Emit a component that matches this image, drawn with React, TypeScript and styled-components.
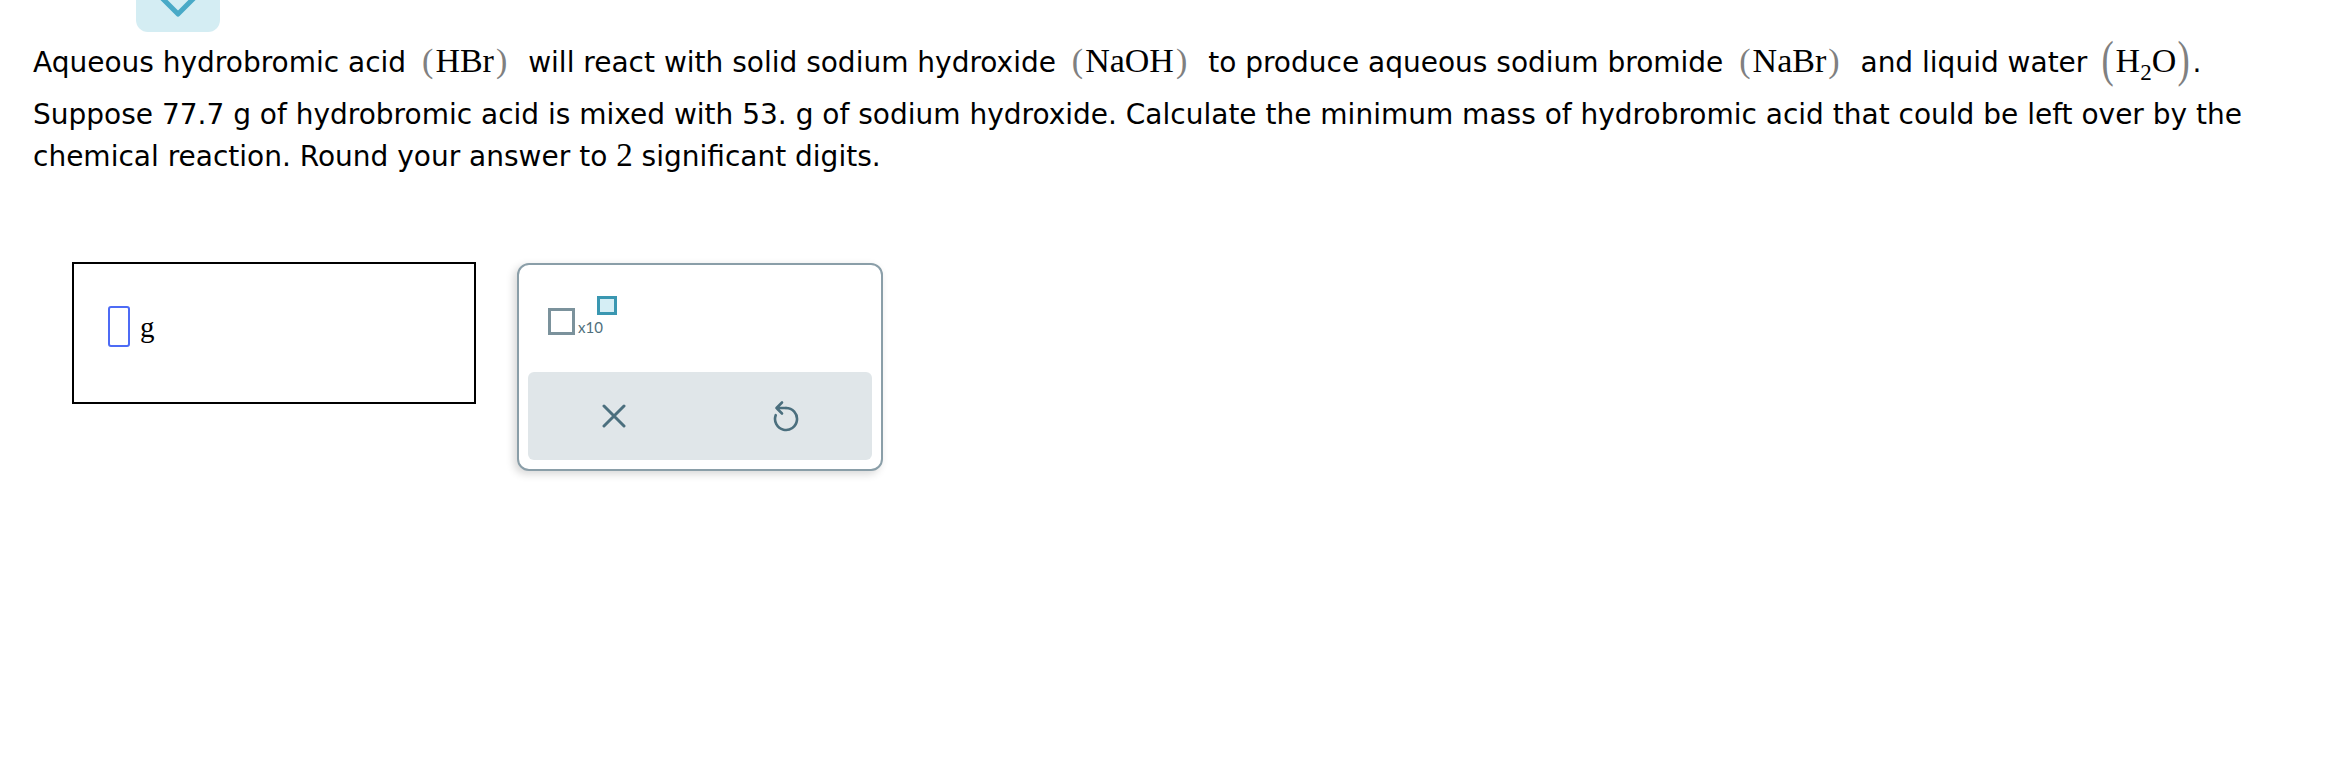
import React from "react";
import styled, { createGlobalStyle } from "styled-components";

const GlobalStyle = createGlobalStyle`
  html, body {
    margin: 0;
    padding: 0;
    background: #ffffff;
  }
  body {
    font-family: "DejaVu Sans", Verdana, sans-serif;
    color: #000000;
  }
`;

const Page = styled.div`
  width: 2346px;
  min-height: 766px;
  box-sizing: border-box;
`;

const TabButton = styled.div`
  margin-left: 136px;
  width: 84px;
  height: 32px;
  background: #d4edf3;
  border-radius: 0 0 12px 12px;
  display: flex;
  justify-content: center;
  align-items: flex-start;
`;

const Question = styled.div`
  margin-top: 10px;
  padding: 0 20px 0 33px;
  font-size: 28px;
`;

const Para = styled.p<{ $gap?: number }>`
  margin: 0 0 ${(p) => p.$gap ?? 0}px 0;
  line-height: 42px;
`;

const Chem = styled.span<{ $tight?: boolean }>`
  display: inline-block;
  font-family: "Liberation Serif", "Times New Roman", serif;
  font-size: 34px;
  line-height: 1;
  margin: ${(p) => (p.$tight ? "0 1px 0 4px" : "0 10px 0 5px")};
  white-space: nowrap;
`;

const Paren = styled.span<{ $big?: boolean }>`
  display: inline-block;
  color: #808080;
  margin: 0 2px;
  transform: ${(p) => (p.$big ? "scale(1.08, 1.5) translateY(-1px)" : "none")};
`;

const Sub = styled.span`
  font-size: 23px;
  position: relative;
  top: 8px;
`;

const Num = styled.span`
  display: inline-block;
  font-family: "Liberation Serif", "Times New Roman", serif;
  font-size: 33px;
  line-height: 1;
`;

const AnswerRow = styled.div`
  margin-top: 84px;
  padding-left: 72px;
  display: flex;
  align-items: flex-start;
  gap: 41px;
`;

const AnswerBox = styled.div`
  width: 404px;
  height: 142px;
  box-sizing: border-box;
  border: 2px solid #000000;
  padding: 42px 0 0 34px;
`;

const InputLine = styled.div`
  display: flex;
  align-items: center;
`;

const Slot = styled.div`
  width: 22px;
  height: 41px;
  box-sizing: border-box;
  border: 2px solid #4d6bf5;
  border-radius: 3px;
`;

const Unit = styled.span`
  font-family: "Liberation Serif", "Times New Roman", serif;
  font-size: 29px;
  margin-left: 10px;
  line-height: 32px;
`;

const Keypad = styled.div`
  margin-top: 1px;
  width: 366px;
  height: 208px;
  box-sizing: border-box;
  border: 2px solid #8a9ea8;
  border-radius: 12px;
  padding: 0 9px 9px 9px;
  display: flex;
  flex-direction: column;
  justify-content: space-between;
  box-shadow: -3px 3px 9px rgba(0, 0, 0, 0.16);
  background: #ffffff;
`;

const SciRow = styled.div`
  display: flex;
  align-items: flex-start;
  padding: 31px 0 0 20px;
`;

const SciBase = styled.div`
  width: 27px;
  height: 27px;
  box-sizing: border-box;
  border: 3px solid #7b929c;
  margin-top: 12px;
`;

const SciTimes = styled.span`
  font-family: Lato, "Open Sans", sans-serif;
  font-size: 15px;
  line-height: 15px;
  color: #4f6f7c;
  margin: 24px 0 0 3px;
`;

const SciExp = styled.div`
  width: 20px;
  height: 19px;
  box-sizing: border-box;
  border: 3px solid #3a97b1;
  background: #d5eef5;
  margin-left: -6px;
`;

const ActionBar = styled.div`
  height: 88px;
  background: #e0e6e9;
  border-radius: 6px;
  display: grid;
  grid-template-columns: 1fr 1fr;
`;

const ActionButton = styled.button`
  border: none;
  background: transparent;
  padding: 0;
  display: flex;
  align-items: center;
  justify-content: center;
  cursor: pointer;
`;

const ICON = "#4b6f7e";

export default function App() {
  return (
    <Page>
      <GlobalStyle />
      <TabButton>
        <svg width="40" height="20" viewBox="0 0 40 20">
          <polyline
            points="3,-3 20,14 37,-3"
            fill="none"
            stroke="#49aac7"
            strokeWidth="5"
            strokeLinecap="round"
            strokeLinejoin="round"
          />
        </svg>
      </TabButton>
      <Question>
        <Para $gap={10}>
          Aqueous hydrobromic acid{" "}
          <Chem>
            <Paren>(</Paren>HBr<Paren>)</Paren>
          </Chem>{" "}
          will react with solid sodium hydroxide{" "}
          <Chem>
            <Paren>(</Paren>NaOH<Paren>)</Paren>
          </Chem>{" "}
          to produce aqueous sodium bromide{" "}
          <Chem>
            <Paren>(</Paren>NaBr<Paren>)</Paren>
          </Chem>{" "}
          and liquid water{" "}
          <Chem $tight>
            <Paren $big>(</Paren>H<Sub>2</Sub>O<Paren $big>)</Paren>
          </Chem>
          .
        </Para>
        <Para>
          Suppose 77.7 g of hydrobromic acid is mixed with 53. g of sodium
          hydroxide. Calculate the minimum mass of hydrobromic acid that could be
          left over by the chemical reaction. Round your answer to <Num>2</Num>{" "}
          significant digits.
        </Para>
      </Question>
      <AnswerRow>
        <AnswerBox>
          <InputLine>
            <Slot />
            <Unit>g</Unit>
          </InputLine>
        </AnswerBox>
        <Keypad>
          <SciRow>
            <SciBase />
            <SciTimes>x10</SciTimes>
            <SciExp />
          </SciRow>
          <ActionBar>
            <ActionButton aria-label="Clear">
              <svg width="24" height="24" viewBox="0 0 24 24">
                <path
                  d="M2 2 L22 22 M22 2 L2 22"
                  stroke={ICON}
                  strokeWidth="3"
                  strokeLinecap="round"
                  fill="none"
                />
              </svg>
            </ActionButton>
            <ActionButton aria-label="Undo">
              <svg width="28" height="32" viewBox="22 17 28 32">
                <path
                  d="M36 25 A11 11 0 1 1 25.7 32.2"
                  stroke={ICON}
                  strokeWidth="2.6"
                  strokeLinecap="round"
                  fill="none"
                />
                <path
                  d="M32 19.5 L26.5 25 L32 30.5 M26.5 25 L36 25"
                  stroke={ICON}
                  strokeWidth="2.6"
                  strokeLinecap="round"
                  strokeLinejoin="round"
                  fill="none"
                />
              </svg>
            </ActionButton>
          </ActionBar>
        </Keypad>
      </AnswerRow>
    </Page>
  );
}
